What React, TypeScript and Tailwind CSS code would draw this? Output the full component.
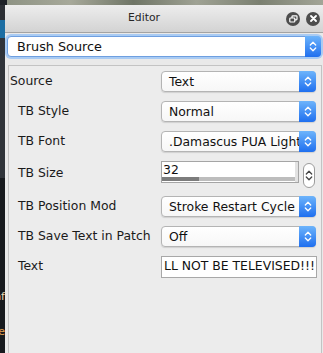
import React from "react";

const font = "font-['DejaVu_Sans',sans-serif]";

// blue up/down arrows used on every popup button
const Chevrons = ({ color = "#ffffff" }: { color?: string }) => (
  <svg width="8" height="13" viewBox="0 0 8 13" fill="none">
    <path d="M1.3 5 L4 2.2 L6.7 5" stroke={color} strokeWidth="1.3" strokeLinecap="round" strokeLinejoin="round" />
    <path d="M1.3 8 L4 10.8 L6.7 8" stroke={color} strokeWidth="1.3" strokeLinecap="round" strokeLinejoin="round" />
  </svg>
);

const Popup = ({ value }: { value: string }) => (
  <div className="flex h-[21px] w-[155px] rounded-[4px] border border-[#b4b4b4] bg-[linear-gradient(#ffffff,#f7f7f7)] shadow-[0_1px_1px_rgba(0,0,0,0.12)]">
    <span className="flex-1 overflow-hidden whitespace-nowrap pl-[7px] leading-[19px] text-[#111]">{value}</span>
    <span className="-my-px -mr-px flex w-[17px] items-center justify-center rounded-r-[4px] bg-[linear-gradient(#6db4fb,#1f6fef)]">
      <Chevrons />
    </span>
  </div>
);

const Row = ({ label, indent = true, children, tall = false }: { label: string; indent?: boolean; children: React.ReactNode; tall?: boolean }) => (
  <div className={`flex ${tall ? "h-[26px] items-start" : "h-[21px] items-center"}`}>
    <span className={`w-[152px] shrink-0 whitespace-nowrap text-[#1a1a1a] ${indent ? "pl-[9px]" : "pl-px"} ${tall ? "pt-[3px]" : ""}`}>{label}</span>
    {children}
  </div>
);

export default function App() {
  return (
    <div className={`flex h-[353px] w-[323px] flex-col overflow-hidden bg-[#1b1e23] text-[12.4px] ${font}`}>
      {/* strip of the desktop picture above the window */}
      <div className="flex h-[5px] shrink-0">
        <div className="w-[7px] bg-[#1d2126]" />
        <div className="flex-1 bg-[linear-gradient(90deg,#8e9384,#a7a99a_20%,#6f7566_40%,#9fa294_60%,#7b8071_80%,#a3a597)]" />
      </div>

      <div className="flex flex-1">
        {/* sliver of the window behind */}
        <div className="flex w-[5px] shrink-0 flex-col">
          <div className="h-[15px] bg-[#2b2f34]" />
          <div className="h-[18px] bg-[#1c6ea3]" />
          <div className="h-[140px] bg-[#30343a]" />
          <div className="flex flex-1 flex-col bg-[#171a1e] text-[11px] leading-none">
            <span className="mt-[113px] block overflow-hidden whitespace-nowrap text-right text-[#e8d9b5]" dir="rtl">nf</span>
            <span className="mt-[24px] block overflow-hidden whitespace-nowrap text-right text-[#e0a050]" dir="rtl">e</span>
          </div>
        </div>

        <div className="flex flex-1 flex-col bg-[#e9e9e9]">
          {/* title bar */}
          <div className="flex h-[28px] shrink-0 items-center border-b border-[#a3a3a3] bg-[linear-gradient(#ededed,#d3d3d3)] pr-[3px]">
            <span className="flex-1 pl-[123px] text-[10.8px] text-[#262626]">Editor</span>
            <div className="flex gap-[6px]">
              <span className="flex h-[14px] w-[14px] items-center justify-center rounded-full bg-[#4d4d4d]">
                <svg width="9" height="8" viewBox="0 0 9 8" fill="none">
                  <rect x="3" y="0.8" width="5" height="4" rx="0.8" stroke="#fff" strokeWidth="1.2" />
                  <rect x="0.8" y="3" width="5" height="4" rx="0.8" fill="#4d4d4d" stroke="#fff" strokeWidth="1.2" />
                </svg>
              </span>
              <span className="flex h-[14px] w-[14px] items-center justify-center rounded-full bg-[#4d4d4d]">
                <svg width="7" height="7" viewBox="0 0 7 7">
                  <path d="M1 1 L6 6 M6 1 L1 6" stroke="#fff" strokeWidth="1.8" strokeLinecap="round" />
                </svg>
              </span>
            </div>
          </div>

          {/* editor selector */}
          <div className="px-[2px] pt-[3px]">
            <div className="flex h-[21px] rounded-[4px] border border-[#6e9fe0] bg-white shadow-[0_0_0_2px_#a9cbf3]">
              <span className="flex-1 pl-[9px] text-[12.8px] leading-[19px] text-[#111]">Brush Source</span>
              <span className="-my-px -mr-px flex w-[16px] items-center justify-center rounded-r-[4px] bg-[linear-gradient(#6db4fb,#1f6fef)]">
                <Chevrons />
              </span>
            </div>
          </div>

          {/* properties panel */}
          <div className="ml-[3px] mr-[1px] mt-[8px] flex flex-1 flex-col gap-[9px] border border-b-0 border-[#c3c3c3] bg-[#ececec] pt-[5px]">
            <Row label="Source" indent={false}>
              <Popup value="Text" />
            </Row>
            <Row label="TB Style">
              <Popup value="Normal" />
            </Row>
            <Row label="TB Font">
              <Popup value=".Damascus PUA Light" />
            </Row>
            <Row label="TB Size" tall>
              <div className="flex h-[22px] w-[138px] border border-[#a5a5a5] bg-white">
                <div className="flex flex-1 flex-col">
                  <span className="flex-1 pl-px leading-[15px] text-[#111]">32</span>
                  <div className="mb-px flex h-[5px]">
                    <div className="w-[37px] bg-[#7c7c7c]" />
                    <div className="flex-1 bg-[#bdbdbd]" />
                  </div>
                </div>
                <div className="w-[3px] bg-[#e2e2e2]" />
              </div>
              <div className="ml-[4px] mt-[2px] flex h-[25px] w-[12px] items-center justify-center rounded-full border border-[#9c9c9c] bg-white">
                <Chevrons color="#444" />
              </div>
            </Row>
            <Row label="TB Position Mod">
              <Popup value="Stroke Restart Cycle" />
            </Row>
            <Row label="TB Save Text in Patch">
              <Popup value="Off" />
            </Row>
            <Row label="Text">
              <div className="flex h-[22px] w-[156px] items-center overflow-hidden whitespace-nowrap border border-[#a8a8a8] bg-white pl-[2px] text-[#111]">
                LL NOT BE TELEVISED!!!
              </div>
            </Row>
          </div>
        </div>
      </div>
    </div>
  );
}
